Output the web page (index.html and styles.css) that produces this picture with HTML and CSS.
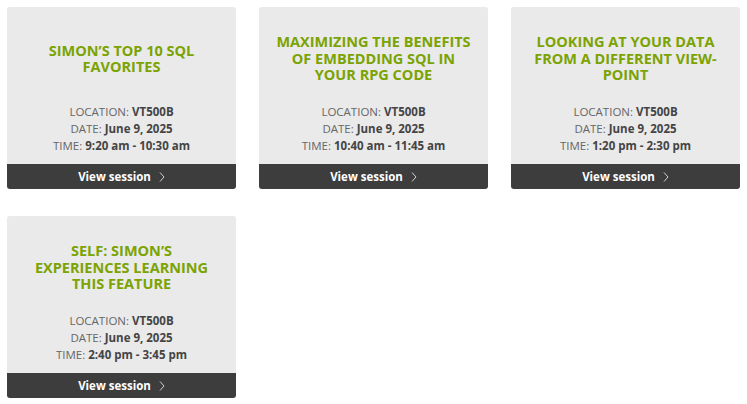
FILE: index.html
```html
<!DOCTYPE html>
<html lang="en">
<head>
<meta charset="utf-8">
<title>Sessions</title>
<link rel="stylesheet" href="styles.css">
</head>
<body>
<div class="grid">
  <div class="card">
    <div class="body">
      <div class="title-box"><h3 class="title">SIMON’S TOP 10 SQL FAVORITES</h3></div>
      <div class="info">
        <div>LOCATION: <b>VT500B</b></div>
        <div>DATE: <b>June 9, 2025</b></div>
        <div>TIME: <b>9:20 am - 10:30 am</b></div>
      </div>
    </div>
    <a class="foot" href="#">View session <svg class="chev" width="6" height="10" viewBox="0 0 6 10"><path d="M1 0.5 L5 5 L1 9.5" fill="none" stroke="#cfcfcf" stroke-width="1"/></svg></a>
  </div>
  <div class="card">
    <div class="body">
      <div class="title-box"><h3 class="title">MAXIMIZING THE BENEFITS OF EMBEDDING SQL IN YOUR RPG CODE</h3></div>
      <div class="info">
        <div>LOCATION: <b>VT500B</b></div>
        <div>DATE: <b>June 9, 2025</b></div>
        <div>TIME: <b>10:40 am - 11:45 am</b></div>
      </div>
    </div>
    <a class="foot" href="#">View session <svg class="chev" width="6" height="10" viewBox="0 0 6 10"><path d="M1 0.5 L5 5 L1 9.5" fill="none" stroke="#cfcfcf" stroke-width="1"/></svg></a>
  </div>
  <div class="card">
    <div class="body">
      <div class="title-box"><h3 class="title">LOOKING AT YOUR DATA FROM A DIFFERENT VIEW-POINT</h3></div>
      <div class="info">
        <div>LOCATION: <b>VT500B</b></div>
        <div>DATE: <b>June 9, 2025</b></div>
        <div>TIME: <b>1:20 pm - 2:30 pm</b></div>
      </div>
    </div>
    <a class="foot" href="#">View session <svg class="chev" width="6" height="10" viewBox="0 0 6 10"><path d="M1 0.5 L5 5 L1 9.5" fill="none" stroke="#cfcfcf" stroke-width="1"/></svg></a>
  </div>
  <div class="card">
    <div class="body">
      <div class="title-box"><h3 class="title">SELF: SIMON’S EXPERIENCES LEARNING THIS FEATURE</h3></div>
      <div class="info">
        <div>LOCATION: <b>VT500B</b></div>
        <div>DATE: <b>June 9, 2025</b></div>
        <div>TIME: <b>2:40 pm - 3:45 pm</b></div>
      </div>
    </div>
    <a class="foot" href="#">View session <svg class="chev" width="6" height="10" viewBox="0 0 6 10"><path d="M1 0.5 L5 5 L1 9.5" fill="none" stroke="#cfcfcf" stroke-width="1"/></svg></a>
  </div>
</div>
</body>
</html>
```
FILE: styles.css
```css
html, body { margin: 0; padding: 0; background: #fff; }
body { font-family: "Open Sans", "Noto Sans", sans-serif; }
.grid {
  padding: 7px;
  display: grid;
  grid-template-columns: repeat(3, 229px);
  column-gap: 23px;
  row-gap: 27px;
}
.card {
  background: #eaeaea;
  border-radius: 3px;
  overflow: hidden;
  display: flex;
  flex-direction: column;
}
.body { padding: 14px 14px 10px; }
.title-box {
  height: 76px;
  display: flex;
  align-items: center;
  justify-content: center;
}
.title {
  margin: 0;
  max-width: 197px;
  font-size: 14.5px;
  line-height: 16.5px;
  font-weight: 700;
  color: #7ba302;
  text-align: center;
}
.info {
  margin-top: 6px;
  text-align: center;
  font-size: 11.5px;
  line-height: 17px;
  color: #666;
}
.info b { color: #444; font-weight: 700; }
.foot {
  height: 25px;
  background: #3d3d3d;
  color: #fff;
  text-decoration: none;
  font-size: 11.5px;
  font-weight: 700;
  display: flex;
  align-items: center;
  justify-content: center;
  gap: 8px;
}
.chev { display: block; }
```
